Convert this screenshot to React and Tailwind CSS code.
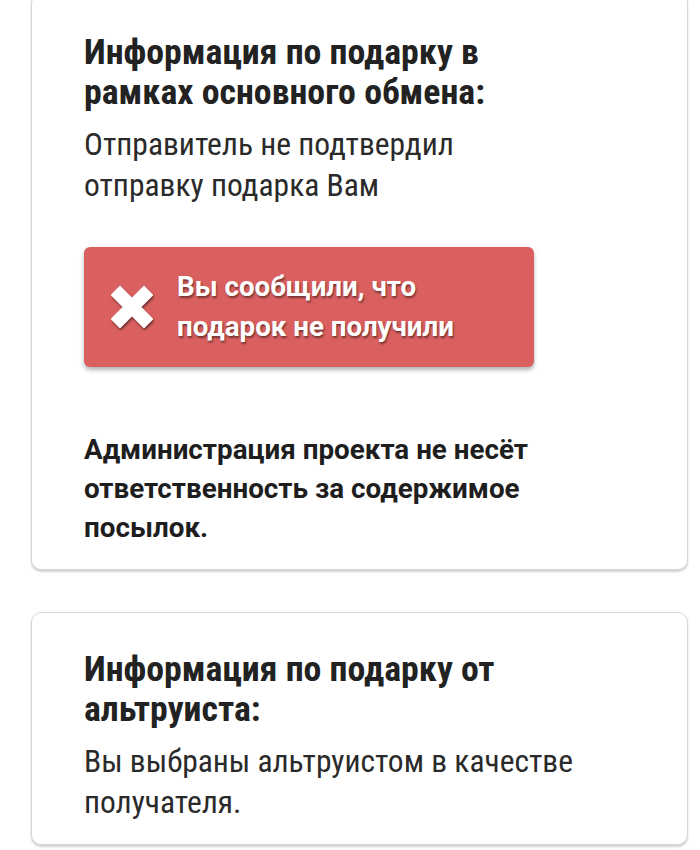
import React from "react";

const condensed = { fontFamily: '"Roboto Condensed", "Liberation Sans Narrow", Roboto, sans-serif' };
const roboto = { fontFamily: "Roboto, sans-serif" };

function XMark() {
  return (
    <svg width="48" height="48" viewBox="0 0 48 48" className="shrink-0 drop-shadow-[1px_2px_1px_rgba(0,0,0,0.45)]">
      <path
        d="M4 12 L12 4 L24 16 L36 4 L44 12 L32 24 L44 36 L36 44 L24 32 L12 44 L4 36 L16 24 Z"
        fill="#ffffff"
        strokeLinejoin="round"
        stroke="#ffffff"
        strokeWidth="2"
      />
    </svg>
  );
}

function Card({ children, className = "" }) {
  return (
    <div
      className={`ml-[31px] w-[657px] bg-white rounded-[10px] border border-[#d6d6d6] shadow-[0_2px_2px_rgba(0,0,0,0.18)] pl-[52px] pr-6 ${className}`}
    >
      {children}
    </div>
  );
}

export default function App() {
  return (
    <div className="w-[700px] h-[850px] bg-white overflow-hidden text-[#222222]">
      <div className="-mt-[7px]">
        <Card className="pt-[38px] pb-[22px]">
          <h2 className="text-[35.8px] leading-[40px] font-bold" style={condensed}>
            Информация по подарку в<br />рамках основного обмена:
          </h2>
          <p className="mt-[12px] text-[31.5px] leading-[41px] text-[#2a2a2a]" style={condensed}>
            Отправитель не подтвердил<br />отправку подарка Вам
          </p>
          <div className="mt-[41px] w-[450px] h-[120px] rounded-[6px] bg-[#d9605e] shadow-[0_3px_4px_rgba(0,0,0,0.3)] flex items-center pl-[24px]">
            <XMark />
            <div
              className="ml-[21px] text-white font-bold text-[27.7px] leading-[40px] [text-shadow:1px_2px_2px_rgba(0,0,0,0.45)]"
              style={roboto}
            >
              Вы сообщили, что<br />подарок не получили
            </div>
          </div>
          <p className="mt-[63px] text-[27.8px] leading-[39px] font-bold text-[#1e1e1e]" style={roboto}>
            Администрация проекта не несёт<br />ответственность за содержимое<br />посылок.
          </p>
        </Card>
        <Card className="mt-[42px] pt-[36px] pb-[21px]">
          <h2 className="text-[35.8px] leading-[40px] font-bold" style={condensed}>
            Информация по подарку от<br />альтруиста:
          </h2>
          <p className="mt-[12px] text-[31.5px] leading-[41px] text-[#2a2a2a]" style={condensed}>
            Вы выбраны альтруистом в качестве<br />получателя.
          </p>
        </Card>
      </div>
    </div>
  );
}
